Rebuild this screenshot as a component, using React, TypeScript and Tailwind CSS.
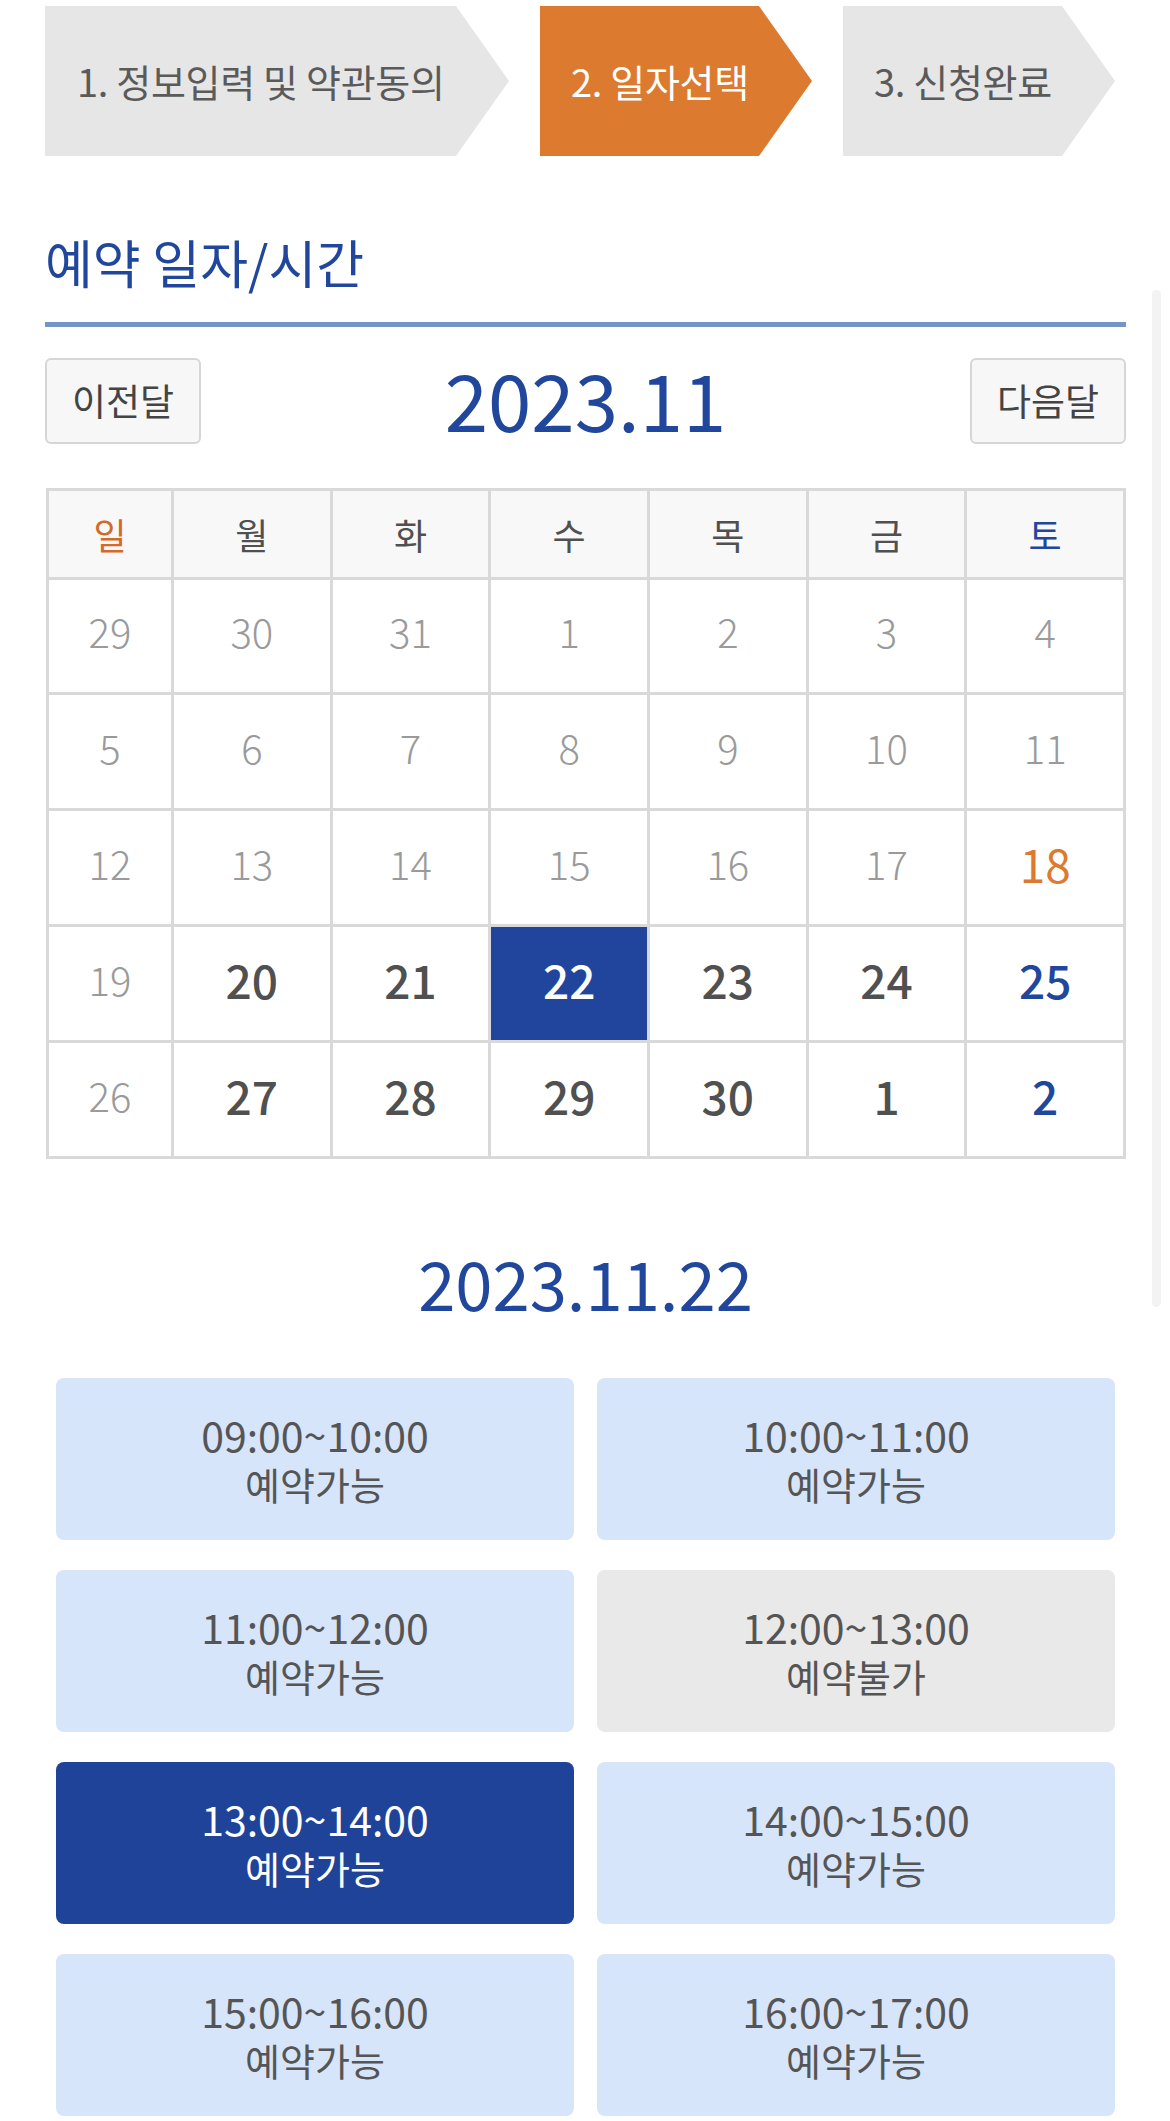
import React from "react";

type Kind = "past" | "avail" | "sat" | "holiday" | "sel";

const rows: [string, Kind][][] = [
  [["29", "past"], ["30", "past"], ["31", "past"], ["1", "past"], ["2", "past"], ["3", "past"], ["4", "past"]],
  [["5", "past"], ["6", "past"], ["7", "past"], ["8", "past"], ["9", "past"], ["10", "past"], ["11", "past"]],
  [["12", "past"], ["13", "past"], ["14", "past"], ["15", "past"], ["16", "past"], ["17", "past"], ["18", "holiday"]],
  [["19", "past"], ["20", "avail"], ["21", "avail"], ["22", "sel"], ["23", "avail"], ["24", "avail"], ["25", "sat"]],
  [["26", "past"], ["27", "avail"], ["28", "avail"], ["29", "avail"], ["30", "avail"], ["1", "avail"], ["2", "sat"]],
];

const kindClass: Record<Kind, string> = {
  past: "bg-white text-[#9a9a9a] text-[40px] font-light",
  avail: "bg-white text-[#505050] text-[46px] font-medium",
  sat: "bg-white text-[#21479d] text-[46px] font-medium",
  holiday: "bg-white text-[#dd7a31] text-[46px] font-normal",
  sel: "bg-[#21459c] text-white text-[46px] font-medium",
};

const slots: { time: string; status: string; kind: "open" | "closed" | "sel" }[] = [
  { time: "09:00~10:00", status: "예약가능", kind: "open" },
  { time: "10:00~11:00", status: "예약가능", kind: "open" },
  { time: "11:00~12:00", status: "예약가능", kind: "open" },
  { time: "12:00~13:00", status: "예약불가", kind: "closed" },
  { time: "13:00~14:00", status: "예약가능", kind: "sel" },
  { time: "14:00~15:00", status: "예약가능", kind: "open" },
  { time: "15:00~16:00", status: "예약가능", kind: "open" },
  { time: "16:00~17:00", status: "예약가능", kind: "open" },
];

const slotClass = {
  open: "bg-[#d7e5fb] text-[#555555]",
  closed: "bg-[#e9e9e9] text-[#555555]",
  sel: "bg-[#1f4399] text-white",
};

export default function App() {
  return (
    <div className="relative min-h-[2121px] bg-white font-['Noto_Sans_CJK_KR','Noto_Sans',sans-serif] pl-[45px] pr-[44px] pt-[6px]">
      {/* steps */}
      <div className="flex h-[150px] gap-[31px]">
        <div className="w-[464px] h-full bg-[#e6e6e6] flex items-center pl-[32px] [clip-path:polygon(0_0,calc(100%-53px)_0,100%_50%,calc(100%-53px)_100%,0_100%)]">
          <span className="text-[38px] leading-none tracking-[-0.3px] text-[#5a5a5a]">1. 정보입력 및 약관동의</span>
        </div>
        <div className="w-[272px] h-full bg-[#dc7a30] flex items-center pl-[31px] [clip-path:polygon(0_0,calc(100%-53px)_0,100%_50%,calc(100%-53px)_100%,0_100%)]">
          <span className="text-[38px] leading-none tracking-[-0.3px] text-white">2. 일자선택</span>
        </div>
        <div className="w-[272px] h-full bg-[#e6e6e6] flex items-center pl-[31px] [clip-path:polygon(0_0,calc(100%-53px)_0,100%_50%,calc(100%-53px)_100%,0_100%)]">
          <span className="text-[38px] leading-none tracking-[-0.3px] text-[#5a5a5a]">3. 신청완료</span>
        </div>
      </div>

      {/* section title */}
      <div className="pt-[80px] pb-[34px] border-b-[5px] border-[#7594c8]">
        <h2 className="text-[52px] leading-none font-normal text-[#21479d]">예약 일자/시간</h2>
      </div>

      {/* month nav */}
      <div className="mt-[31px] flex items-center h-[86px]">
        <button className="w-[156px] h-[86px] rounded-[6px] border-2 border-[#d6d6d6] bg-[#f7f7f7] text-[37px] text-[#444444]">
          이전달
        </button>
        <div className="flex-1 text-center text-[78px] leading-none text-[#21479d] pb-[6px]">2023.11</div>
        <button className="w-[156px] h-[86px] rounded-[6px] border-2 border-[#d6d6d6] bg-[#f7f7f7] text-[37px] text-[#444444]">
          다음달
        </button>
      </div>

      {/* calendar */}
      <div className="mt-[44px] ml-[1px] w-[1080px] grid grid-cols-[122px_repeat(6,1fr)] gap-[3px] p-[3px] bg-[#d9d9d9]">
        {["일", "월", "화", "수", "목", "금", "토"].map((d, i) => (
          <div
            key={d}
            className={`h-[86px] flex items-center justify-center bg-[#f8f8f8] text-[36px] ${
              i === 0 ? "text-[#d4692a]" : i === 6 ? "text-[#21479d]" : "text-[#505050]"
            }`}
          >
            {d}
          </div>
        ))}
        {rows.map((row, ri) =>
          row.map(([n, k], ci) => (
            <div
              key={`${ri}-${ci}`}
              className={`${ri === 0 ? "h-[112px]" : "h-[113px]"} flex items-center justify-center leading-none pb-[10px] ${kindClass[k]}`}
            >
              {n}
            </div>
          ))
        )}
      </div>

      {/* selected date */}
      <div className="mt-[89px] text-center text-[67px] leading-none text-[#21479d]">2023.11.22</div>

      {/* time slots */}
      <div className="mt-[63px] px-[11px] grid grid-cols-2 gap-x-[23px] gap-y-[30px]">
        {slots.map((s) => (
          <div
            key={s.time}
            className={`h-[162px] rounded-lg flex flex-col items-center justify-center ${slotClass[s.kind]}`}
          >
            <span className="text-[41px] leading-[49px]">{s.time}</span>
            <span className="text-[38px] leading-[49px]">{s.status}</span>
          </div>
        ))}
      </div>

      {/* scrollbar */}
      <div className="absolute left-[1152px] top-[290px] w-[9px] h-[1017px] rounded-full bg-[#f3f3f3]" />
    </div>
  );
}
